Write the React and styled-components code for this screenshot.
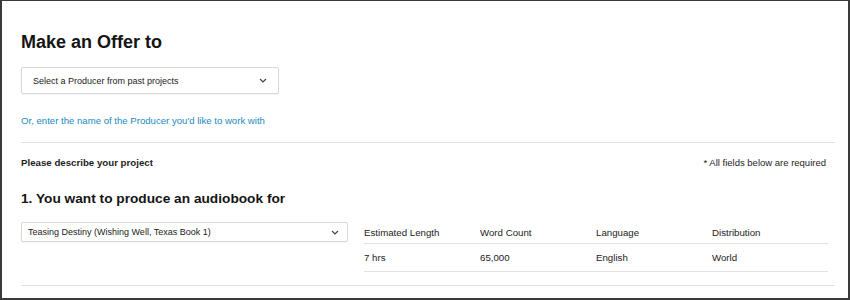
import React from 'react';
import styled, { createGlobalStyle } from 'styled-components';

const GlobalStyle = createGlobalStyle`
  body {
    margin: 0;
    background: #fff;
    font-family: 'Liberation Sans', Arial, sans-serif;
    color: #1e1e1e;
  }
`;

const Frame = styled.div`
  width: 850px;
  height: 300px;
  box-sizing: border-box;
  border: 2px solid #3a3a3a;
  border-top-width: 1px;
  padding: 29px 13px 0 19px;
  overflow: hidden;
`;

const Title = styled.h1`
  margin: 0;
  font-size: 18px;
  line-height: 24px;
  font-weight: bold;
  color: #141414;
`;

const SelectBox = styled.div`
  box-sizing: border-box;
  width: ${p => p.$width}px;
  height: ${p => p.$height}px;
  margin-top: ${p => p.$top || 0}px;
  display: flex;
  align-items: center;
  justify-content: space-between;
  padding: 0 ${p => p.$padRight}px 0 ${p => p.$padLeft}px;
  border: 1px solid #d9d9d9;
  border-radius: 2px;
  box-shadow: 0 1px 1px rgba(0, 0, 0, 0.04);
  font-size: ${p => p.$size}px;
  color: #222;
  background: #fff;
  flex-shrink: 0;
`;

const Chevron = () => (
  <svg width="8" height="5" viewBox="0 0 8 5">
    <polyline points="1,1 4,4 7,1" fill="none" stroke="#444" strokeWidth="1.2" />
  </svg>
);

const LinkText = styled.a`
  display: block;
  margin-top: 20px;
  font-size: 9.6px;
  line-height: 14px;
  color: #1b8ac2;
  text-decoration: none;
`;

const Rule = styled.div`
  height: 1px;
  background: #e2e2e2;
  margin-top: ${p => p.$top}px;
`;

const DescRow = styled.div`
  display: flex;
  justify-content: space-between;
  align-items: center;
  margin-top: 13px;
  padding-right: 9px;
  font-size: 9.5px;
  line-height: 14px;
`;

const DescLabel = styled.span`
  font-weight: bold;
  font-size: 9.7px;
`;

const Heading = styled.h2`
  margin: 19px 0 0;
  font-size: 13.7px;
  line-height: 20px;
  font-weight: bold;
  color: #141414;
`;

const BookRow = styled.div`
  display: flex;
  align-items: flex-start;
  gap: 16px;
  margin-top: 13px;
`;

const Table = styled.div`
  width: 464px;
  display: grid;
  grid-template-columns: repeat(4, 1fr);
  font-size: 9.7px;
`;

const Cell = styled.div`
  height: ${p => p.$height}px;
  display: flex;
  align-items: center;
  border-bottom: 1px solid #e2e2e2;
  color: #222;
`;

const columns = [
  ['Estimated Length', '7 hrs'],
  ['Word Count', '65,000'],
  ['Language', 'English'],
  ['Distribution', 'World'],
];

export default function App() {
  return (
    <>
      <GlobalStyle />
      <Frame>
        <Title>Make an Offer to</Title>
        <SelectBox $width={258} $height={27} $top={13} $padLeft={11} $padRight={11} $size={9}>
          <span>Select a Producer from past projects</span>
          <Chevron />
        </SelectBox>
        <LinkText href="#">Or, enter the name of the Producer you'd like to work with</LinkText>
        <Rule $top={14} />
        <DescRow>
          <DescLabel>Please describe your project</DescLabel>
          <span>* All fields below are required</span>
        </DescRow>
        <Heading>1. You want to produce an audiobook for</Heading>
        <BookRow>
          <SelectBox $width={327} $height={20} $padLeft={6} $padRight={8} $size={9}>
            <span>Teasing Destiny (Wishing Well, Texas Book 1)</span>
            <Chevron />
          </SelectBox>
          <Table>
            {columns.map(([h]) => (
              <Cell key={h} $height={21}>{h}</Cell>
            ))}
            {columns.map(([h, v]) => (
              <Cell key={h + v} $height={27}>{v}</Cell>
            ))}
          </Table>
        </BookRow>
        <Rule $top={13} />
      </Frame>
    </>
  );
}
